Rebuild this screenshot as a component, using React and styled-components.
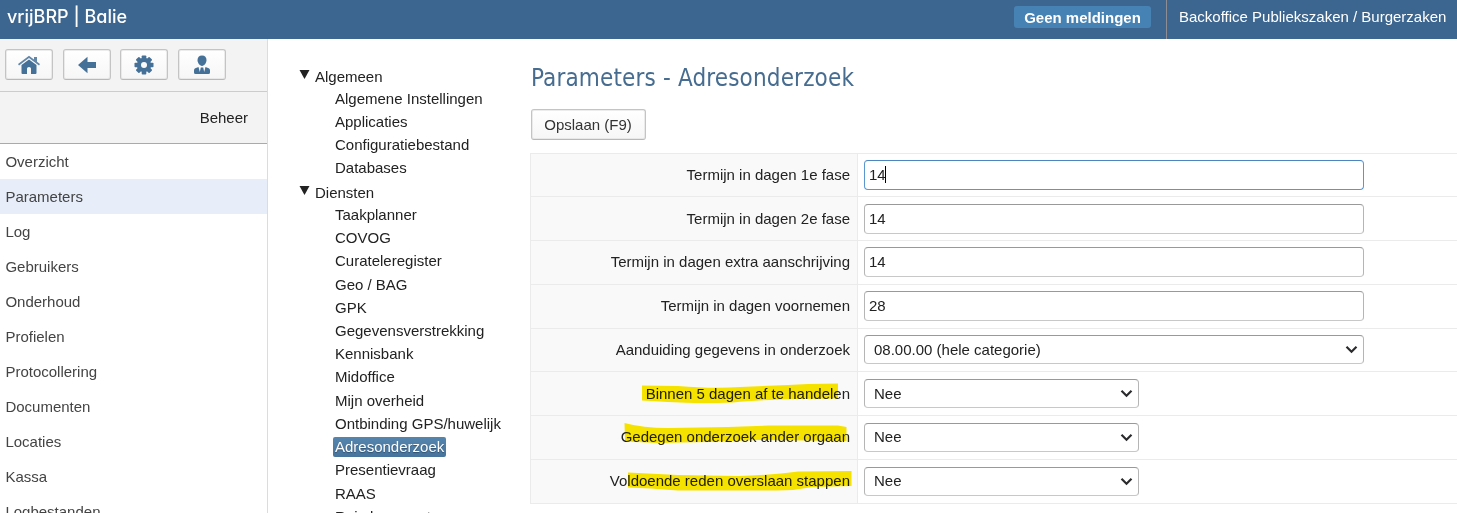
import React from 'react';
import styled, { createGlobalStyle, css } from 'styled-components';

const Global = createGlobalStyle`
  * { box-sizing: border-box; }
  html, body { margin: 0; padding: 0; overflow: hidden; background: #fff; }
  body { font: 15px/20px "Liberation Sans", Arial, sans-serif; color: #222; }
`;

const Page = styled.div`
  height: 513px;
  overflow: hidden;
  display: flex;
  flex-direction: column;
`;
const Header = styled.header`
  flex: none;
  height: 39px;
  background: #3c658f;
  color: #fff;
  display: flex;
  justify-content: space-between;
`;
const Brand = styled.div`
  padding: 7px 0 0 7px;
  font: 500 18px/20px Inter, sans-serif;
  font-feature-settings: "cv11";
  white-space: nowrap;
`;
const HeaderRight = styled.div`
  display: flex;
`;
const Badge = styled.span`
  margin: 6px 15px 0 0;
  width: 137px;
  height: 22px;
  border-radius: 3px;
  background: #4682b4;
  font-weight: bold;
  line-height: 23px;
  text-align: center;
  white-space: nowrap;
`;
const Office = styled.div`
  width: 291px;
  border-left: 1px solid #8e8e92;
  padding: 7px 0 0 12px;
  white-space: nowrap;
`;
const Body = styled.div`
  flex: 1;
  min-height: 0;
  display: flex;
`;
const Sidebar = styled.aside`
  flex: none;
  width: 268px;
  border-right: 1px solid #dcdcdc;
  overflow: hidden;
`;
const Toolbar = styled.div`
  height: 53px;
  padding: 10px 0 0 5px;
  display: flex;
  gap: 9.7px;
  background: #f3f3f3;
  border-bottom: 1px solid #ccc;
`;
const buttonFace = css`
  border: 1px solid #c4c4c4;
  border-bottom-color: #b8b8b8;
  border-radius: 3px;
  background: linear-gradient(#fff, #f6f6f6);
  box-shadow: inset 0 0 0 1px #dcdcdc88;
  display: flex;
  align-items: center;
  justify-content: center;
  padding: 0;
`;
const ToolButton = styled.button`
  ${buttonFace}
  width: 48px;
  height: 31px;
  color: #457199;
`;
const SectionTitle = styled.div`
  height: 52px;
  padding: 16px 19px 0 0;
  text-align: right;
  background: #f3f3f3;
  border-bottom: 1px solid #aaa;
`;
const NavItem = styled.div`
  height: 35px;
  padding-left: 5.4px;
  line-height: 36px;
  color: #444;
  background: ${(p) => (p.$active ? '#e7eef9' : 'transparent')};
`;
const Tree = styled.nav`
  flex: none;
  width: 262px;
  padding: 25px 0 0 31px;
  overflow: hidden;
`;
const TreeGroup = styled.div`
  height: 23.22px;
  display: flex;
  align-items: center;
  padding-top: 2px;
  gap: 5px;

  svg { margin-top: -3px; }
`;
const TreeItem = styled.div`
  height: 23.22px;
  padding-left: 34px;
  display: flex;
  align-items: center;
`;
const TreeLabel = styled.span`
  padding: 0 2px;
  border-radius: 2px;
  white-space: nowrap;
  ${(p) => p.$active && css`
    background: linear-gradient(#5585ae, #46739c);
    color: #fff;
    text-shadow: 0 1px 1px #00000055;
  `}
`;
const Main = styled.main`
  flex: 1;
  min-width: 0;
  padding: 26px 0 0 1px;
`;
const Title = styled.h1`
  margin: 0;
  height: 44px;
  font: 400 24px/26px "DejaVu Sans Condensed", "DejaVu Sans", sans-serif;
  font-stretch: condensed;
  letter-spacing: 0.15px;
  color: #466c90;
  white-space: nowrap;
`;
const SaveButton = styled.button`
  ${buttonFace}
  width: 115px;
  height: 31px;
  padding-right: 1px;
  font: 15px "Liberation Sans", Arial, sans-serif;
  color: #333;
`;
const Form = styled.div`
  margin: 12.5px 0 0 -1px;
  border: solid #ebebeb;
  border-width: 1px 0 0 1px;
`;
const Row = styled.div`
  height: 43.75px;
  display: flex;
  border-bottom: 1px solid #ebebeb;
`;
const LabelCell = styled.div`
  width: 327px;
  padding-right: 7px;
  background: #f9f9f9;
  border-right: 1px solid #ebebeb;
  display: flex;
  align-items: center;
  justify-content: flex-end;
`;
const Label = styled.span`
  position: relative;
  white-space: nowrap;
`;
const Marker = styled.svg`
  position: absolute;
  right: -2px;
  top: -4px;
  width: 244px;
  height: 26px;
  mix-blend-mode: multiply;
`;
const FieldCell = styled.div`
  display: flex;
  align-items: center;
  padding-left: 6px;
`;
const fieldFrame = css`
  border: 1px solid #b5b5b5;
  border-top-color: #999;
  border-bottom-color: #c8c8c8;
  border-radius: 4px;
  background: #fff;
  display: flex;
  align-items: center;
`;
const Input = styled.div`
  ${fieldFrame}
  width: 500px;
  height: 30px;
  padding-left: 4px;
  ${(p) => p.$focus && css`border-color: #4b86c0 #5a96d0 #5a96d0;`}
`;
const Caret = styled.i`
  width: 1px;
  height: 17px;
  margin-left: -1px;
  background: #000;
`;
const Select = styled.div`
  ${fieldFrame}
  width: ${(p) => p.$width}px;
  height: 29px;
  padding: 0 5px 0 9px;
  justify-content: space-between;
`;

const Home = () => (
  <svg width="22" height="20" viewBox="0 0 22 20" fill="currentColor">
    <path d="M11 .8 0 9l1 1.400L11 3l10 7.400 1-1.400-3-2.300V2h-3v2.500z" opacity=".85" />
    <path d="M11 4.500 3.500 10v8q0 1 1 1H9v-5.500q0-1.500 2-1.500t2 1.500V19h4.500q1 0 1-1v-8z" />
  </svg>
);
const Back = () => (
  <svg width="18" height="18" viewBox="0 0 18 18" fill="currentColor">
    <path d="M0 9 9.500.8V6H18v6H9.500v5.200z" />
  </svg>
);
const Gear = () => (
  <svg width="20" height="20" viewBox="0 0 20 20" fill="currentColor">
    {[0, 45, 90, 135].map((a) => (
      <rect key={a} x="7.700" y=".5" width="4.600" height="19" rx=".8" transform={`rotate(${a} 10 10)`} />
    ))}
    <circle cx="10" cy="10" r="7.200" />
    <circle cx="10" cy="10" r="3" fill="#fafafa" />
  </svg>
);
const Person = () => (
  <svg width="18" height="20" viewBox="0 0 18 20" fill="currentColor">
    <path d="M9 .5c3 0 4.500 2 4.500 4.600S11.500 11 9 11 4.500 7.700 4.500 5.100 6 .5 9 .5z" />
    <path d="M5.500 12 2.300 13.200Q1 13.800 1 15.500V17.500q0 1.500 1.500 1.500h13q1.500 0 1.500-1.500v-2q0-1.700-1.300-2.300L12.500 12l-1.300 5-1-4.500H7.800l-1 4.500z" />
  </svg>
);
const Chevron = () => (
  <svg width="13" height="9" viewBox="0 0 13 9" fill="none" stroke="#2b2b2e" strokeWidth="2.200">
    <path d="M1.500 1.800 6.500 6.800 11.500 1.800" />
  </svg>
);
const Triangle = () => (
  <svg width="11" height="10" viewBox="0 0 11 10" fill="#222">
    <path d="M.5 0h10L5.500 9z" />
  </svg>
);

const NAV = ['Overzicht', 'Parameters', 'Log', 'Gebruikers', 'Onderhoud', 'Profielen', 'Protocollering', 'Documenten', 'Locaties', 'Kassa', 'Logbestanden'];
const TREE = [
  ['Algemeen', ['Algemene Instellingen', 'Applicaties', 'Configuratiebestand', 'Databases']],
  ['Diensten', ['Taakplanner', 'COVOG', 'Curateleregister', 'Geo / BAG', 'GPK', 'Gegevensverstrekking', 'Kennisbank', 'Midoffice', 'Mijn overheid', 'Ontbinding GPS/huwelijk', 'Adresonderzoek', 'Presentievraag', 'RAAS', 'Reisdocumenten']],
];
const ROWS = [
  { label: 'Termijn in dagen 1e fase', value: '14', focus: true },
  { label: 'Termijn in dagen 2e fase', value: '14' },
  { label: 'Termijn in dagen extra aanschrijving', value: '14' },
  { label: 'Termijn in dagen voornemen', value: '28' },
  { label: 'Aanduiding gegevens in onderzoek', value: '08.00.00 (hele categorie)', select: 500 },
  { label: 'Binnen 5 dagen af te handelen', value: 'Nee', select: 275, mark: 'M34 5.500 L70 6 Q105 9 132 7 L180 5 L200 4 L230 3.500 V18.500 L190 19 Q150 20 125 22.500 Q90 24 60 22 L34 20.500Z' },
  { label: 'Gedegen onderzoek ander orgaan', value: 'Nee', select: 275, mark: 'M16.500 0 Q35 5 60 5 L120 4 L160 2.500 L230 2.500 L238.500 4 V18 L150 17 L100 19 L50 20 L17 18.500Z' },
  { label: 'Voldoende reden overslaan stappen', value: 'Nee', select: 275, mark: 'M20 5.500 L70 8 L130 9 Q165 8 190 4.500 L243.500 4 V19 L205 20 Q185 24 165 23.500 L70 23.500 Q40 21 20 20.500Z' },
];

export default function App() {
  return (
    <Page>
      <Global />
      <Header>
        <Brand>vrijBRP | Balie</Brand>
        <HeaderRight>
          <Badge>Geen meldingen</Badge>
          <Office>Backoffice Publiekszaken / Burgerzaken</Office>
        </HeaderRight>
      </Header>
      <Body>
        <Sidebar>
          <Toolbar>
            <ToolButton aria-label="Home"><Home /></ToolButton>
            <ToolButton aria-label="Terug"><Back /></ToolButton>
            <ToolButton aria-label="Instellingen"><Gear /></ToolButton>
            <ToolButton aria-label="Gebruiker"><Person /></ToolButton>
          </Toolbar>
          <SectionTitle>Beheer</SectionTitle>
          {NAV.map((n) => <NavItem key={n} $active={n === 'Parameters'}>{n}</NavItem>)}
        </Sidebar>
        <Tree>
          {TREE.map(([group, items]) => (
            <React.Fragment key={group}>
              <TreeGroup><Triangle />{group}</TreeGroup>
              {items.map((i) => (
                <TreeItem key={i}><TreeLabel $active={i === 'Adresonderzoek'}>{i}</TreeLabel></TreeItem>
              ))}
            </React.Fragment>
          ))}
        </Tree>
        <Main>
          <Title>Parameters - Adresonderzoek</Title>
          <SaveButton>Opslaan (F9)</SaveButton>
          <Form>
            {ROWS.map((r) => (
              <Row key={r.label}>
                <LabelCell>
                  <Label>
                    {r.label}
                    {r.mark && <Marker viewBox="0 0 244 26"><path d={r.mark} fill="#fce800" /></Marker>}
                  </Label>
                </LabelCell>
                <FieldCell>
                  {r.select
                    ? <Select $width={r.select}>{r.value}<Chevron /></Select>
                    : <Input $focus={r.focus}>{r.value}{r.focus && <Caret />}</Input>}
                </FieldCell>
              </Row>
            ))}
          </Form>
        </Main>
      </Body>
    </Page>
  );
}
